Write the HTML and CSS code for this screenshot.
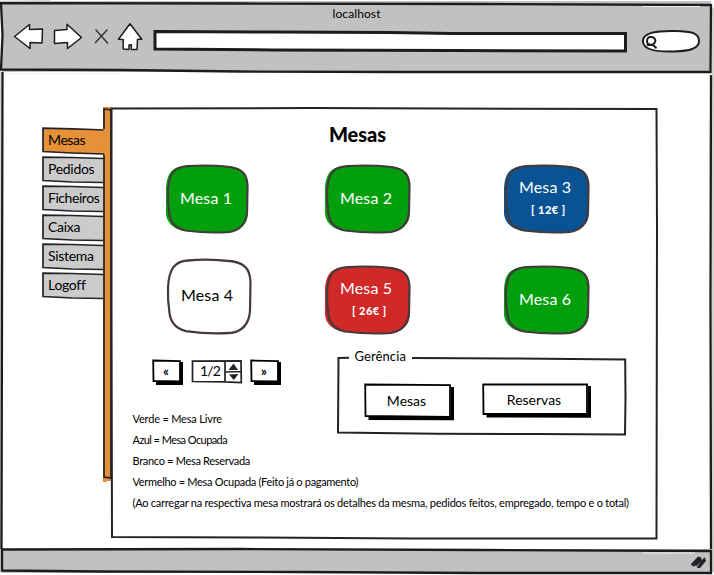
FILE: index.html
```html
<!DOCTYPE html>
<html lang="pt">
<head>
<meta charset="utf-8">
<title>localhost</title>
<link rel="stylesheet" href="styles.css">
</head>
<body>
<div class="window">
  <svg class="sketch" viewBox="0 0 714 575">
    <path class="chrome-fill" d="M2 1H711V72H2zM2 549H711V573H2z"/>
    <path class="chrome-glow" d="M0 1.5L50 1M0 67V573M713 8V572"/>
    <path class="chrome-line" d="M1 3.2L240 3.500L480 4L711 5L710.5 72L400 72L240 71.5L120 70L1 69.5L2.5 35z"/>
    <path class="chrome-line" d="M2.5 72L2 300L1.5 549M711 75L710.5 300L711 549"/>
    <path class="chrome-line" d="M2 549.5L240 549L480 550L711 551L711 573L480 573L300 572L100 571.5L2 570.5z"/>
    <path class="chrome-highlight" d="M643 6.5H700M643 553H695M4 73.5H120"/>
  </svg>
  <header class="browser">
    <div class="page-title">localhost</div>
    <nav class="toolbar">
      <svg class="icon back" viewBox="0 0 31 28"><path d="M1.5 14.5L16.5 2.5V7.5L29.5 7L29 21L17 20.5V26.5z"/></svg>
      <svg class="icon forward" viewBox="0 0 31 28"><path d="M2.5 8.5L15 7.5V2.2L29.5 15.5L15.5 26.5V20.5L2.5 21.5z"/></svg>
      <svg class="icon stop" viewBox="0 0 16 28"><path d="M3 8L14.5 21M14 8L2.5 20.5"/></svg>
      <svg class="icon home" viewBox="0 0 26 28"><path d="M13 1.8L24.8 17.2H20.5L20 27.5H14.3V22.7L12 23V27.5L6.2 27V17.5L1.5 17.2z"/></svg>
      <svg class="address" viewBox="0 0 474 24"><path d="M2 2.500L120 3L237 3.500L300 4.500L472.5 4.500V22L300 21.500L120 21L2 20z"/></svg>
      <svg class="search" viewBox="0 0 60 24"><path d="M2 13C1 3 17 1.7 34 2S58 4 58 12S48 22 33 22.5S3 22 2 13z"/><path class="lens" d="M9 8C14 7.5 15.5 11 13.5 14S6 16 6 12.500S8 8 9 8M6.500 16H12L15 18.700"/></svg>
    </nav>
  </header>

  <main class="content">
    <nav class="tabs">
      <a class="tab active"><svg class="sketch" viewBox="0 0 63 29"><path d="M1 1.200L30 1.800L63 3V27.500L30 26L1 24.500z"/><path class="tab-line" d="M61.500 3L50 2.500L30 1.800L1 1.200L1 24.500L30 26L62 27"/></svg><span>Mesas</span></a>
      <a class="tab"><svg class="sketch" viewBox="0 0 63 29"><path class="tab-line" d="M61 2.500L30 1.500L1 1.200V24.500L30 26L61 26.500"/></svg><span>Pedidos</span></a>
      <a class="tab files"><svg class="sketch" viewBox="0 0 63 29"><path class="tab-line" d="M61 2.500L30 1.500L1 1.200V24.500L30 26L61 26.500"/></svg><span>Ficheiros</span></a>
      <a class="tab box"><svg class="sketch" viewBox="0 0 63 29"><path class="tab-line" d="M61 2.500L30 1.500L1 1.200V24.500L30 26L61 26.500"/></svg><span>Caixa</span></a>
      <a class="tab"><svg class="sketch" viewBox="0 0 63 29"><path class="tab-line" d="M61 2.500L30 1.500L1 1.200V24.500L30 26L61 26.500"/></svg><span>Sistema</span></a>
      <a class="tab"><svg class="sketch" viewBox="0 0 63 29"><path class="tab-line" d="M61 2.500L30 1.500L1 1.200V24.500L30 26L61 26.500"/></svg><span>Logoff</span></a>
    </nav>
    <svg class="rail" viewBox="0 0 9 375"><path class="rail-fill" d="M0 0H9V374H4V375H0z"/><path class="rail-line" d="M1 22V2L8 3V371L1 370V47"/></svg>

    <section class="panel">
      <svg class="sketch" viewBox="0 0 546 432" preserveAspectRatio="none"><path class="panel-line" d="M.5 1.500L200 1L400 1.800L545.500 2L546 120L545.500 431.500L300 431.500L150 430.500L1 430L.5 200z"/></svg>
      <h1 class="title">Mesas</h1>

      <div class="tables">
        <div class="table free"><svg class="sketch" viewBox="0 0 86 70" preserveAspectRatio="none"><use href="#blob"/></svg><span class="name">Mesa 1</span></div>
        <div class="table free"><svg class="sketch" viewBox="0 0 86 70" preserveAspectRatio="none"><use href="#blob"/></svg><span class="name">Mesa 2</span></div>
        <div class="table busy"><svg class="sketch" viewBox="0 0 86 70" preserveAspectRatio="none"><use href="#blob"/></svg><span class="name">Mesa 3</span><span class="bill">[ 12€ ]</span></div>
        <div class="table reserved"><svg class="sketch" viewBox="0 0 86 70" preserveAspectRatio="none"><use href="#blob"/></svg><span class="name">Mesa 4</span></div>
        <div class="table paid"><svg class="sketch" viewBox="0 0 86 70" preserveAspectRatio="none"><use href="#blob"/></svg><span class="name">Mesa 5</span><span class="bill">[ 26€ ]</span></div>
        <div class="table free"><svg class="sketch" viewBox="0 0 86 70" preserveAspectRatio="none"><use href="#blob"/></svg><span class="name">Mesa 6</span></div>
      </div>

      <div class="lower">
        <div class="info">
          <div class="pager">
            <button class="step"><svg class="sketch" viewBox="0 0 31 27"><path class="shadow" d="M28 3H31V26H4V23H28z"/><path class="edge" d="M1.200 1.500L28 2.200V22.500L1.500 22z"/></svg><span>«</span></button>
            <div class="spinner"><svg class="sketch" viewBox="0 0 52 27"><path class="spin-line" d="M1.500 2.200L50 1.800L50.300 23.500L34 22.800L1.500 22.500zM34 2V23M34 13L50 12.500"/><path class="arrow" d="M42.500 4.500L47 11H37.500zM38 15.500L47.500 15L42.800 21z"/></svg><span>1/2</span></div>
            <button class="step"><svg class="sketch" viewBox="0 0 31 27"><path class="shadow" d="M28 3H31V26H4V23H28z"/><path class="edge" d="M1.200 1.500L28 2.200V22.500L1.500 22z"/></svg><span>»</span></button>
          </div>
          <ul class="legend">
            <li class="free-note">Verde = Mesa Livre</li>
            <li class="busy-note">Azul = Mesa Ocupada</li>
            <li class="reserved-note">Branco = Mesa Reservada</li>
            <li class="paid-note">Vermelho = Mesa Ocupada (Feito já o pagamento)</li>
            <li class="help-note">(Ao carregar na respectiva mesa mostrará os detalhes da mesma, pedidos feitos, empregado, tempo e o total)</li>
          </ul>
        </div>
        <div class="group">
          <svg class="sketch" viewBox="0 0 290 88"><path class="group-line" d="M12 9.800L1.500 10L1 84.500L100 85.800L200 86L288 86.500L288.500 50L288.200 11.500L180 10.500L75 10"/></svg>
          <div class="group-name">Gerência</div>
          <div class="actions">
            <button class="action tables-btn"><svg class="sketch" viewBox="0 0 90 38"><path class="shadow" d="M87 4H90V37.200L4.500 37V33.500L87 34z"/><path class="edge" d="M1.200 1.500L86 2.200V34L1.500 33z"/></svg><span>Mesas</span></button>
            <button class="action book-btn"><svg class="sketch" viewBox="0 0 109 36"><path class="shadow" d="M106 3H109V34.800L4.500 34.500V31L106 31.500z"/><path class="edge" d="M1.200 1.500L105 1.500V31L1.500 31z"/></svg><span>Reservas</span></button>
          </div>
        </div>
      </div>
    </section>
  </main>

  <footer class="status"><svg class="grip" viewBox="0 0 18 16"><path d="M3 10.500L9.500 3.500M4.500 11.500L11.500 4M9 13L15.500 4.500M10.500 13L16 6.500M7 11L12 6"/></svg></footer>
</div>
<svg class="defs"><defs><g id="blob">
  <path class="blob-fill" d="M0 24C1 9 6 3 20 2L42 1L66 2C80 4 85 10 85 22V48C85 60 78 66 66 68L40 68L20 67C6 65 1 58 0 50z"/>
  <path class="blob-line" d="M2 27C3 9 9 3 22 2.200Q43 .5 66 3C79 5 84 10 84.500 22L84 48C83 60 77 66 66 68Q43 69.500 20 66.500C8 64 4 56 3.500 50Q1.500 38 2 27z"/>
</g></defs></svg>
</body>
</html>
```

FILE: styles.css
```css
* { box-sizing: border-box; }
body {
  margin: 0;
  background: #fff;
  color: #000;
  font-family: Lato, "Liberation Sans", sans-serif;
  font-variant-ligatures: none;
}
svg { display: block; fill: none; overflow: visible; }
button { border: 0; padding: 0; background: none; color: inherit; font: inherit; }
.defs { position: absolute; width: 0; height: 0; }
.window {
  position: relative;
  width: 714px;
  height: 575px;
  overflow: hidden;
  display: grid;
  grid-template-rows: 72px 477px 26px;
}
.sketch { position: absolute; inset: 0; width: 100%; height: 100%; }
.sketch ~ * { position: relative; }

.chrome-fill { fill: #c1c1c1; }
.chrome-line { stroke: #1c1c20; stroke-width: 2.3; }
.chrome-glow { stroke: #c6c6c2; stroke-width: 1.5; }
.chrome-highlight { stroke: #eee; stroke-width: 1; }

.page-title {
  padding: 6px 1px 0 0;
  height: 22px;
  font-size: 12px;
  line-height: 16px;
  letter-spacing: .1px;
  text-align: center;
}
.toolbar { display: flex; align-items: flex-start; padding-left: 12.5px; }
.toolbar path { fill: #fff; stroke: #1c1c20; stroke-width: 1.5; stroke-linejoin: round; stroke-linecap: round; }
.icon { height: 28px; }
.back, .forward { width: 31px; }
.forward { margin-left: 8.5px; }
.stop { width: 16px; margin-left: 10px; }
.toolbar .stop path { fill: none; stroke: #333; }
.home { width: 26px; margin-left: 8px; }
.address { width: 474px; height: 24px; margin: 7px 0 0 10px; }
.toolbar .address path { stroke-width: 3; stroke-linejoin: miter; }
.search { width: 60px; height: 24px; margin: 7px 0 0 14px; }
.search path { stroke-width: 2; }

.content { display: flex; align-items: flex-start; padding-left: 42px; }
.tabs { position: relative; width: 61px; padding-top: 54.5px; font-size: 14px; line-height: 20px; }
.tab { position: relative; display: block; height: 29px; padding: 3px 0 0 6px; white-space: nowrap; }
.tab .sketch { width: 63px; height: 29px; }
.tab path { fill: #cbcbcb; }
.tab.active path { fill: #e69138; }
.tab .tab-line { stroke: #22222a; stroke-width: 1.7; }
.tab.active { letter-spacing: -.4px; z-index: 1; }
.tab { letter-spacing: -.3px; }
.tab.files { letter-spacing: -.45px; }
.rail { width: 9px; height: 375px; margin-top: 34.5px; }
.rail-fill { fill: #e69138; }
.rail-line { stroke: #22222a; stroke-width: 1.7; }

.panel { position: relative; width: 546px; height: 432px; margin: 35px 0 0 -1px; }
.panel-line { stroke: #22222a; stroke-width: 2; }
.title {
  margin: 0;
  padding: 15px 0 0 218px;
  height: 57px;
  font-size: 20px;
  line-height: 24px;
  font-weight: 900;
  letter-spacing: -.1px;
}
.tables {
  display: grid;
  grid-template-columns: 159px 179px 86px;
  grid-template-rows: 70px 77px;
  row-gap: 24px;
  padding-left: 55px;
  align-items: end;
}
.table {
  position: relative;
  width: 86px;
  height: 70px;
  display: flex;
  flex-direction: column;
  align-items: flex-start;
  justify-content: center;
  padding: 0 0 3px 15px;
  color: #fff;
}
.table:first-child { width: 83px; padding-left: 14px; }
.name { font-size: 16px; line-height: 20px; white-space: pre; letter-spacing: .15px; }
.bill { padding: 4px 0 0 12px; font-size: 11px; line-height: 18px; font-weight: 900; letter-spacing: .5px; }
.blob-fill { fill: currentColor; }
.blob-line { stroke: #453a3c; stroke-width: 2.2; }
.free .sketch { color: #029f0c; }
.busy .sketch { color: #085394; }
.paid .sketch { color: #d02928; }
.reserved { height: 77px; color: #000; }
.reserved .sketch { color: #fff; }

.lower { display: flex; padding: 13px 0 0 21.5px; }
.info { width: 204px; }
.pager { display: flex; padding: 11px 0 0 19.5px; font-size: 14px; line-height: 20px; }
.step { position: relative; width: 31px; height: 27px; padding: 0 3px 3px 0; font-size: 13px; font-weight: 700; }
.edge { fill: #fff; stroke: #000; stroke-width: 1.8; }
.shadow { fill: #000; }
.spinner { position: relative; width: 52px; height: 27px; margin: 0 7px 0 8px; padding: 2px 0 0 9px; letter-spacing: -.8px; }
.spin-line { stroke: #22222a; stroke-width: 1.7; }
.arrow { fill: #222; }
.legend { margin: 22px 0 0; padding: 0; list-style: none; font-size: 11px; line-height: 21px; white-space: nowrap; }
.free-note { letter-spacing: -.18px; }
.busy-note { letter-spacing: -.57px; }
.reserved-note { letter-spacing: -.3px; }
.paid-note { letter-spacing: -.31px; }
.help-note { letter-spacing: -.24px; }
.group { position: relative; width: 290px; height: 88px; }
.group-line { stroke: #22222a; stroke-width: 2; }
.group-name { padding: 0 0 0 18px; font-size: 13px; line-height: 16px; letter-spacing: .1px; }
.actions { display: flex; padding: 19px 0 0 27px; }
.action { position: relative; font-size: 14px; }
.tables-btn { width: 90px; height: 38px; padding: 0 4px 4px 0; }
.book-btn { width: 109px; height: 36px; margin-left: 28px; padding: 0 4px 4px 0; }

.status { display: flex; justify-content: flex-end; padding: 5px 7px 0 0; }
.grip { width: 18px; height: 16px; position: relative; }
.grip path { stroke: #22222a; stroke-width: 2; stroke-linecap: round; }
.browser { position: relative; }
```
